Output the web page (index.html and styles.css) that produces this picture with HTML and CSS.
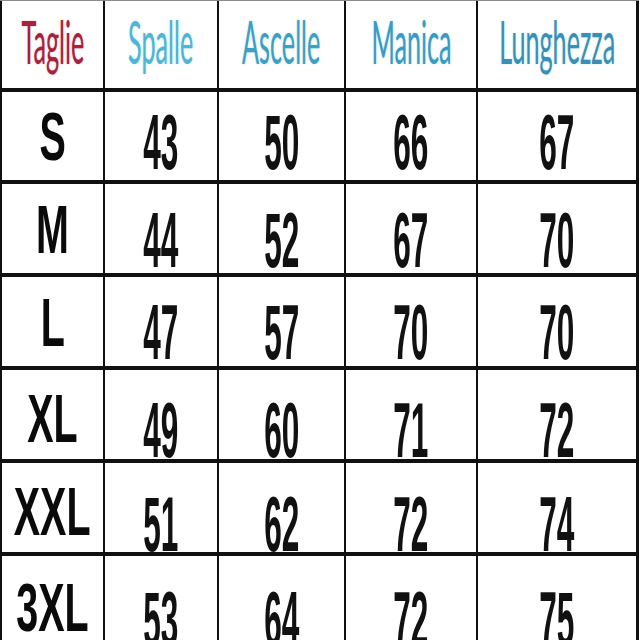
FILE: index.html
```html
<!DOCTYPE html>
<html>
<head>
<meta charset="utf-8">
<link rel="stylesheet" href="styles.css">
</head>
<body>
<div class="table">
  <div class="row head">
    <div class="cell"><span class="h taglie">Taglie</span></div>
    <div class="cell"><span class="h spalle">Spalle</span></div>
    <div class="cell"><span class="h ascelle">Ascelle</span></div>
    <div class="cell"><span class="h manica">Manica</span></div>
    <div class="cell"><span class="h lung">Lunghezza</span></div>
  </div>
  <div class="row r1">
    <div class="cell size"><span class="s">S</span></div>
    <div class="cell num"><span class="n">43</span></div>
    <div class="cell num"><span class="n">50</span></div>
    <div class="cell num"><span class="n">66</span></div>
    <div class="cell num"><span class="n">67</span></div>
  </div>
  <div class="row r2">
    <div class="cell size"><span class="s">M</span></div>
    <div class="cell num"><span class="n">44</span></div>
    <div class="cell num"><span class="n">52</span></div>
    <div class="cell num"><span class="n">67</span></div>
    <div class="cell num"><span class="n">70</span></div>
  </div>
  <div class="row r3">
    <div class="cell size"><span class="s">L</span></div>
    <div class="cell num"><span class="n">47</span></div>
    <div class="cell num"><span class="n">57</span></div>
    <div class="cell num"><span class="n">70</span></div>
    <div class="cell num"><span class="n">70</span></div>
  </div>
  <div class="row r4">
    <div class="cell size"><span class="s">XL</span></div>
    <div class="cell num"><span class="n">49</span></div>
    <div class="cell num"><span class="n">60</span></div>
    <div class="cell num"><span class="n">71</span></div>
    <div class="cell num"><span class="n">72</span></div>
  </div>
  <div class="row r5">
    <div class="cell size"><span class="s">XXL</span></div>
    <div class="cell num"><span class="n">51</span></div>
    <div class="cell num"><span class="n">62</span></div>
    <div class="cell num"><span class="n">72</span></div>
    <div class="cell num"><span class="n">74</span></div>
  </div>
  <div class="row r6">
    <div class="cell size"><span class="s">3XL</span></div>
    <div class="cell num"><span class="n">53</span></div>
    <div class="cell num"><span class="n">64</span></div>
    <div class="cell num"><span class="n">72</span></div>
    <div class="cell num"><span class="n">75</span></div>
  </div>
</div>
</body>
</html>
```

FILE: styles.css
```css
html, body {
  margin: 0;
  padding: 0;
  background: #ffffff;
  width: 640px;
  height: 640px;
  overflow: hidden;
}

.table {
  display: grid;
  width: fit-content;
  grid-template-columns: 101px 112px 125px 130px 158px;
  grid-template-rows: 87px 88px 89px 89px 89px 89px 89px;
  column-gap: 2px;
  row-gap: 4px;
  background: #111111;
  padding: 0 3px 0 2px;
  border-top: 1px solid #8a8a8a;
}

.row {
  display: contents;
}

.cell {
  background: #ffffff;
  display: flex;
  align-items: center;
  justify-content: center;
  overflow: visible;
  box-sizing: border-box;
}

.head .cell {
  padding-bottom: 7px;
}

.h {
  display: inline-block;
  font-family: Lato, "Open Sans", sans-serif;
  font-size: 60px;
  line-height: 1;
  white-space: nowrap;
  transform: scaleX(0.42);
}

.taglie { color: #a3243c; text-shadow: 0 0 3px rgba(240, 120, 140, 0.6); }
.spalle { color: #4fb4d6; text-shadow: 0 0 3px rgba(140, 220, 240, 0.6); }
.ascelle { color: #3d9fc4; text-shadow: 0 0 3px rgba(140, 210, 235, 0.6); }
.manica { color: #3a9ac6; text-shadow: 0 0 3px rgba(140, 210, 235, 0.6); }
.lung { color: #3a8fb6; text-shadow: 0 0 3px rgba(140, 210, 235, 0.6); }

.s {
  display: inline-block;
  font-family: "Liberation Sans", Arial, sans-serif;
  font-weight: bold;
  font-size: 68px;
  line-height: 1;
  color: #0a0a0a;
  white-space: nowrap;
  transform: scaleX(0.58);
}

.n {
  display: inline-block;
  font-family: "Liberation Sans", Arial, sans-serif;
  font-weight: bold;
  font-size: 77px;
  line-height: 1;
  color: #111111;
  white-space: nowrap;
  transform: scaleX(0.41);
}

.r1 .num { padding-top: 12px; }
.r2 .num { padding-top: 24px; }
.r3 .num { padding-top: 22px; }
.r4 .num { padding-top: 32px; }
.r5 .num { padding-top: 34px; }
.r6 .num { padding-top: 38px; }

.r4 .size { padding-top: 6px; }
.r5 .size { padding-top: 6px; }
.r6 .size { padding-top: 12px; }
```
